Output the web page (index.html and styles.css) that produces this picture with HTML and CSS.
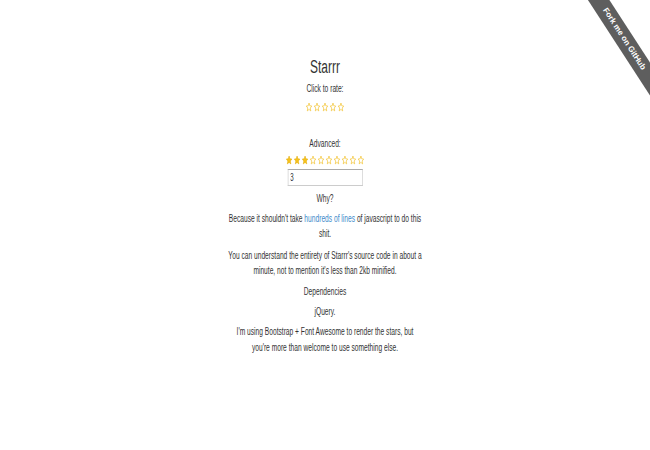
FILE: index.html
```html
<!DOCTYPE html>
<html lang="en">
<head>
  <meta charset="UTF-8" />
  <title>Starrr</title>
  <link rel="stylesheet" href="styles.css">
</head>
<body>

<svg class="defs" width="0" height="0">
  <symbol id="star" viewBox="0 0 24 24">
    <path d="M12 2.5l2.9 6.6 7.1.6-5.4 4.7 1.6 7-6.2-3.7-6.2 3.7 1.6-7L2 9.7l7.1-.6z"/>
  </symbol>
</svg>

<!-- Fork ribbon -->
<div class="ribbon-wrap">
  <a class="ribbon" href="#">Fork me on GitHub</a>
</div>

<div class="page">
  <h1>Starrr</h1>
  <p class="label">Click to rate:</p>
  <div class="starrr">
    <svg class="star off"><use href="#star"/></svg><svg class="star off"><use href="#star"/></svg><svg class="star off"><use href="#star"/></svg><svg class="star off"><use href="#star"/></svg><svg class="star off"><use href="#star"/></svg>
  </div>

  <p class="label advanced">Advanced:</p>
  <div class="starrr">
    <svg class="star on"><use href="#star"/></svg><svg class="star on"><use href="#star"/></svg><svg class="star on"><use href="#star"/></svg><svg class="star off"><use href="#star"/></svg><svg class="star off"><use href="#star"/></svg><svg class="star off"><use href="#star"/></svg><svg class="star off"><use href="#star"/></svg><svg class="star off"><use href="#star"/></svg><svg class="star off"><use href="#star"/></svg><svg class="star off"><use href="#star"/></svg>
  </div>
  <input class="count" type="text" value="3">

  <p class="label why">Why?</p>
  <p class="text">Because it shouldn't take <a href="#">hundreds of lines</a> of javascript to do this shit.</p>
  <p class="text">You can understand the entirety of Starrr's source code in about a minute, not to mention it's less than 2kb minified.</p>

  <p class="label deps">Dependencies</p>
  <p class="label jq">jQuery.</p>
  <p class="text last">I'm using Bootstrap + Font Awesome to render the stars, but you're more than welcome to use something else.</p>
</div>

</body>
</html>
```

FILE: styles.css
```css
body {
  margin: 0;
  font-family: 'Liberation Sans', Arial, sans-serif;
  font-size: 10px;
  color: #333;
  background: #fff;
}
.defs { position: absolute; }
/* the shot is squeezed sideways, so the column is too */
.page {
  width: 300px;
  margin: 0 auto;
  padding-top: 57px;
  text-align: center;
  transform: scaleX(0.665);
  transform-origin: 50% 0;
}
h1 {
  font-size: 18px;
  font-weight: normal;
  line-height: 20px;
  margin: 0 0 5px;
}
p {
  margin: 0;
  line-height: 14px;
}
.label { margin-bottom: 6px; }
.advanced { margin-top: 25px; margin-bottom: 4px; }
.why { margin-top: 6px; margin-bottom: 5px; }
.deps { margin-top: 2px; }
.text {
  line-height: 15px;
  margin-bottom: 7px;
}
.text.last { line-height: 16px; margin-top: -1px; padding: 0 8px; }
a { color: #428bca; text-decoration: none; }
.starrr {
  height: 10px;
  line-height: 0;
}
.star {
  width: 12px;
  height: 10px;
  vertical-align: top;
}
.star.on { fill: #f7c21b; stroke: #e0a800; stroke-width: 1.5; }
.star.off { fill: none; stroke: #f2c230; stroke-width: 2; }
.count {
  display: block;
  margin: 4px auto 0;
  width: 113px;
  height: 17px;
  box-sizing: border-box;
  border: 1px solid #ccc;
  border-top-color: #aaa;
  padding: 0 3px;
  font-family: inherit;
  font-size: 10px;
  color: #333;
}
.ribbon-wrap {
  position: absolute;
  top: 0;
  right: 0;
  width: 100px;
  height: 100px;
  overflow: hidden;
}
.ribbon {
  position: absolute;
  top: 30px;
  left: -1px;
  width: 150px;
  height: 18px;
  line-height: 18px;
  background: #5e5e5e;
  color: #fff;
  font-size: 8px;
  font-weight: bold;
  text-align: center;
  transform: rotate(57deg);
}
```
